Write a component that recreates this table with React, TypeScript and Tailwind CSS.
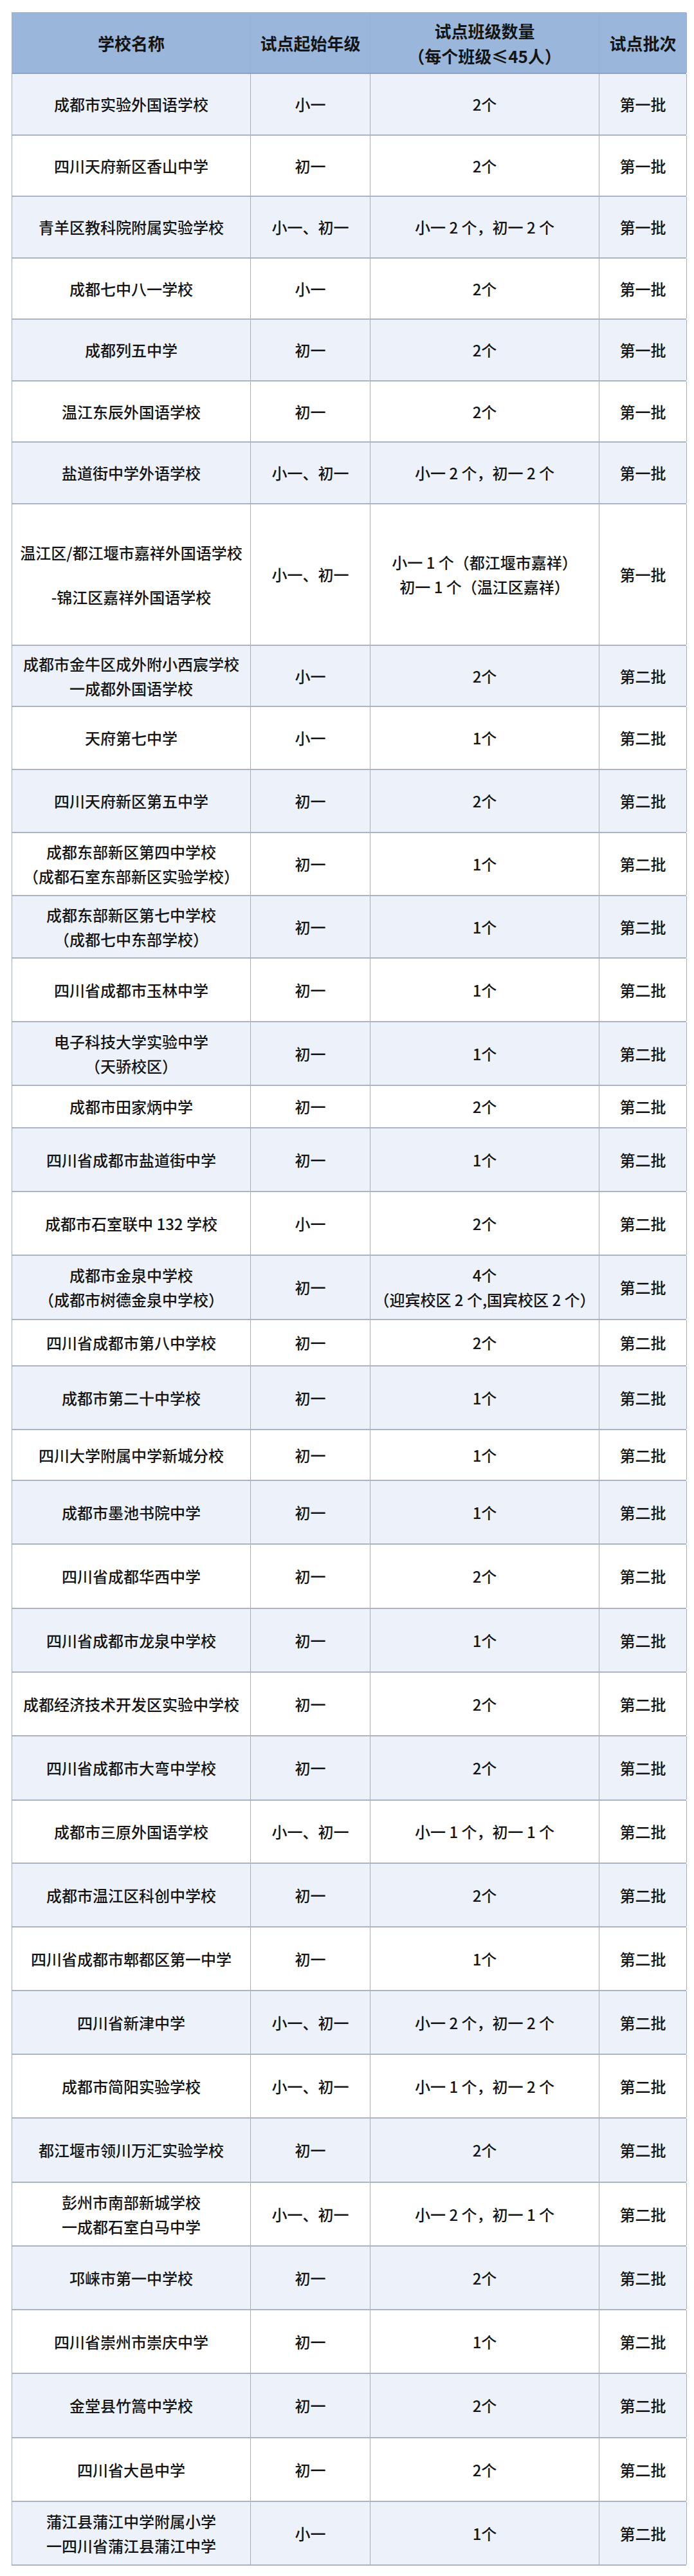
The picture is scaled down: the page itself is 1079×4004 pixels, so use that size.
import React from "react";

type Row = {
  name: string[];
  grade: string;
  count: string[];
  batch: string;
  h: string;
  nameGap?: string;
};

const rows: Row[] = [
  { name: ["成都市实验外国语学校"], grade: "小一", count: ["2个"], batch: "第一批", h: "h-[96px]" },
  { name: ["四川天府新区香山中学"], grade: "初一", count: ["2个"], batch: "第一批", h: "h-[95px]" },
  { name: ["青羊区教科院附属实验学校"], grade: "小一、初一", count: ["小一 2 个，初一 2 个"], batch: "第一批", h: "h-[96px]" },
  { name: ["成都七中八一学校"], grade: "小一", count: ["2个"], batch: "第一批", h: "h-[95px]" },
  { name: ["成都列五中学"], grade: "初一", count: ["2个"], batch: "第一批", h: "h-[96px]" },
  { name: ["温江东辰外国语学校"], grade: "初一", count: ["2个"], batch: "第一批", h: "h-[95px]" },
  { name: ["盐道街中学外语学校"], grade: "小一、初一", count: ["小一 2 个，初一 2 个"], batch: "第一批", h: "h-[96px]" },
  {
    name: ["温江区/都江堰市嘉祥外国语学校", "-锦江区嘉祥外国语学校"],
    grade: "小一、初一",
    count: ["小一 1 个（都江堰市嘉祥）", "初一 1 个（温江区嘉祥）"],
    batch: "第一批",
    h: "h-[220px]",
    nameGap: "gap-[31px]",
  },
  { name: ["成都市金牛区成外附小西宸学校", "一成都外国语学校"], grade: "小一", count: ["2个"], batch: "第二批", h: "h-[95px]" },
  { name: ["天府第七中学"], grade: "小一", count: ["1个"], batch: "第二批", h: "h-[98px]" },
  { name: ["四川天府新区第五中学"], grade: "初一", count: ["2个"], batch: "第二批", h: "h-[98px]" },
  { name: ["成都东部新区第四中学校", "（成都石室东部新区实验学校）"], grade: "初一", count: ["1个"], batch: "第二批", h: "h-[98px]" },
  { name: ["成都东部新区第七中学校", "（成都七中东部学校）"], grade: "初一", count: ["1个"], batch: "第二批", h: "h-[97px]" },
  { name: ["四川省成都市玉林中学"], grade: "初一", count: ["1个"], batch: "第二批", h: "h-[99px]" },
  { name: ["电子科技大学实验中学", "（天骄校区）"], grade: "初一", count: ["1个"], batch: "第二批", h: "h-[99px]" },
  { name: ["成都市田家炳中学"], grade: "初一", count: ["2个"], batch: "第二批", h: "h-[66px]" },
  { name: ["四川省成都市盐道街中学"], grade: "初一", count: ["1个"], batch: "第二批", h: "h-[99px]" },
  { name: ["成都市石室联中 132 学校"], grade: "小一", count: ["2个"], batch: "第二批", h: "h-[99px]" },
  {
    name: ["成都市金泉中学校", "（成都市树德金泉中学校）"],
    grade: "初一",
    count: ["4个", "（迎宾校区 2 个,国宾校区 2 个）"],
    batch: "第二批",
    h: "h-[100px]",
  },
  { name: ["四川省成都市第八中学校"], grade: "初一", count: ["2个"], batch: "第二批", h: "h-[72px]" },
  { name: ["成都市第二十中学校"], grade: "初一", count: ["1个"], batch: "第二批", h: "h-[99px]" },
  { name: ["四川大学附属中学新城分校"], grade: "初一", count: ["1个"], batch: "第二批", h: "h-[79px]" },
  { name: ["成都市墨池书院中学"], grade: "初一", count: ["1个"], batch: "第二批", h: "h-[99px]" },
  { name: ["四川省成都华西中学"], grade: "初一", count: ["2个"], batch: "第二批", h: "h-[100px]" },
  { name: ["四川省成都市龙泉中学校"], grade: "初一", count: ["1个"], batch: "第二批", h: "h-[99px]" },
  { name: ["成都经济技术开发区实验中学校"], grade: "初一", count: ["2个"], batch: "第二批", h: "h-[99px]" },
  { name: ["四川省成都市大弯中学校"], grade: "初一", count: ["2个"], batch: "第二批", h: "h-[100px]" },
  { name: ["成都市三原外国语学校"], grade: "小一、初一", count: ["小一 1 个，初一 1 个"], batch: "第二批", h: "h-[98px]" },
  { name: ["成都市温江区科创中学校"], grade: "初一", count: ["2个"], batch: "第二批", h: "h-[99px]" },
  { name: ["四川省成都市郫都区第一中学"], grade: "初一", count: ["1个"], batch: "第二批", h: "h-[99px]" },
  { name: ["四川省新津中学"], grade: "小一、初一", count: ["小一 2 个，初一 2 个"], batch: "第二批", h: "h-[99px]" },
  { name: ["成都市简阳实验学校"], grade: "小一、初一", count: ["小一 1 个，初一 2 个"], batch: "第二批", h: "h-[99px]" },
  { name: ["都江堰市领川万汇实验学校"], grade: "初一", count: ["2个"], batch: "第二批", h: "h-[100px]" },
  { name: ["彭州市南部新城学校", "一成都石室白马中学"], grade: "小一、初一", count: ["小一 2 个，初一 1 个"], batch: "第二批", h: "h-[99px]" },
  { name: ["邛崃市第一中学校"], grade: "初一", count: ["2个"], batch: "第二批", h: "h-[99px]" },
  { name: ["四川省崇州市崇庆中学"], grade: "初一", count: ["1个"], batch: "第二批", h: "h-[99px]" },
  { name: ["金堂县竹篙中学校"], grade: "初一", count: ["2个"], batch: "第二批", h: "h-[100px]" },
  { name: ["四川省大邑中学"], grade: "初一", count: ["2个"], batch: "第二批", h: "h-[99px]" },
  { name: ["蒲江县蒲江中学附属小学", "一四川省蒲江县蒲江中学"], grade: "小一", count: ["1个"], batch: "第二批", h: "h-[99px]" },
];

const cols = "grid grid-cols-[371px_186px_356px_136px]";
const cell = "flex flex-col items-center justify-center text-center border-r border-[#a3aec0]";

export default function App() {
  return (
    <div
      className="w-[1079px] min-h-[4004px] bg-white pt-[19px] pl-[18px] text-[#141414]"
      style={{ fontFamily: '"Noto Sans CJK SC", "Noto Sans", sans-serif' }}
    >
      <div className="w-[1049px] border-t border-l border-[#a3aec0]">
        {/* header */}
        <div className={`${cols} h-[95px] bg-[#9ab6db] border-b-2 border-[#8fa2bd] text-[26px] font-bold leading-[39px]`}>
          <div className={cell}>学校名称</div>
          <div className={cell}>试点起始年级</div>
          <div className={cell}>
            <div>试点班级数量</div>
            <div>（每个班级≤45人）</div>
          </div>
          <div className={cell}>试点批次</div>
        </div>

        {rows.map((r, i) => (
          <div
            key={i}
            className={`${cols} ${r.h} border-b-2 border-[#a9b4c4] text-[24px] font-medium leading-[38px] ${
              i % 2 === 0 ? "bg-[#edf2fa]" : "bg-white"
            }`}
          >
            <div className={`${cell} ${r.nameGap ?? ""}`}>
              {r.name.map((n) => (
                <div key={n} className="whitespace-nowrap">
                  {n}
                </div>
              ))}
            </div>
            <div className={cell}>{r.grade}</div>
            <div className={cell}>
              {r.count.map((c) => (
                <div key={c} className="whitespace-nowrap">
                  {c}
                </div>
              ))}
            </div>
            <div className={cell}>{r.batch}</div>
          </div>
        ))}
      </div>
    </div>
  );
}
